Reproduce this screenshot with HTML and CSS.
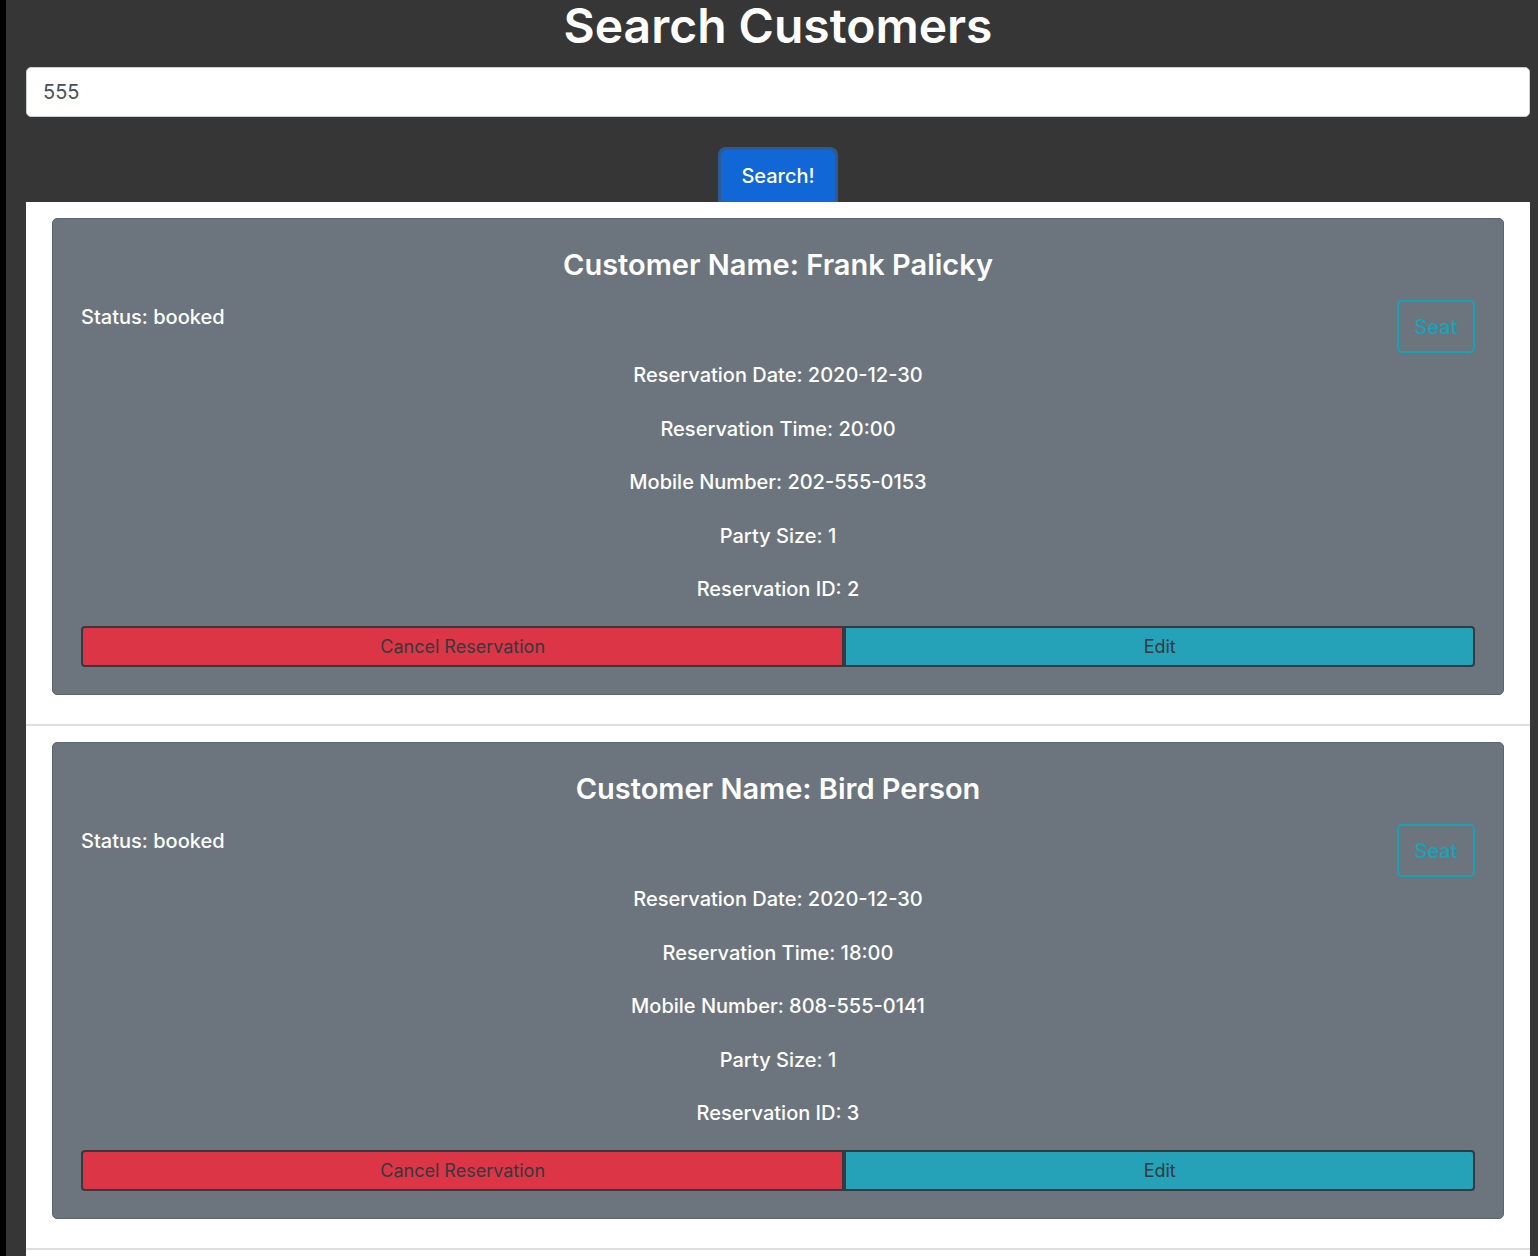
FILE: index.html
```html
<!DOCTYPE html>
<html lang="en">
<head>
<meta charset="utf-8">
<title>Search Customers</title>
<link rel="stylesheet" href="styles.css">
</head>
<body>
<div class="page">
  <h1 class="page-title">Search Customers</h1>
  <input class="search-input" type="text" value="555">
  <div class="search-row">
    <button class="btn-search" type="button">Search!</button>
  </div>
  <ul class="results">
    <li class="result-item">
      <div class="res-card">
        <h2 class="res-title">Customer Name: Frank Palicky</h2>
        <div class="status-row">
          <p class="status">Status: booked</p>
          <button class="btn-seat" type="button">Seat</button>
        </div>
        <p class="info">Reservation Date: 2020-12-30</p>
        <p class="info">Reservation Time: 20:00</p>
        <p class="info">Mobile Number: 202-555-0153</p>
        <p class="info">Party Size: 1</p>
        <p class="info info-last">Reservation ID: 2</p>
        <div class="actions">
          <button class="btn-act btn-cancel" type="button">Cancel Reservation</button>
          <button class="btn-act btn-edit" type="button">Edit</button>
        </div>
      </div>
    </li>
    <li class="result-item">
      <div class="res-card">
        <h2 class="res-title">Customer Name: Bird Person</h2>
        <div class="status-row">
          <p class="status">Status: booked</p>
          <button class="btn-seat" type="button">Seat</button>
        </div>
        <p class="info">Reservation Date: 2020-12-30</p>
        <p class="info">Reservation Time: 18:00</p>
        <p class="info">Mobile Number: 808-555-0141</p>
        <p class="info">Party Size: 1</p>
        <p class="info info-last">Reservation ID: 3</p>
        <div class="actions">
          <button class="btn-act btn-cancel" type="button">Cancel Reservation</button>
          <button class="btn-act btn-edit" type="button">Edit</button>
        </div>
      </div>
    </li>
  </ul>
</div>
</body>
</html>
```

FILE: styles.css
```css
* { box-sizing: border-box; }

html, body {
  margin: 0;
  padding: 0;
  background: #363636;
  height: 100%;
}

body {
  font-family: Inter, "Noto Sans", "Liberation Sans", sans-serif;
  color: #fff;
  border-left: 6px solid #000;
  overflow: hidden;
}

.page {
  padding: 0 8px 0 20px;
}

.page-title {
  margin: 0 0 15px;
  font-size: 48px;
  line-height: 52px;
  font-weight: 600;
  text-align: center;
  color: #fff;
}

.search-input {
  display: block;
  width: 100%;
  height: 50px;
  padding: 0 16px;
  font-family: inherit;
  font-size: 20px;
  color: #495057;
  background: #fff;
  border: 1px solid #c9ced4;
  border-radius: 5px;
  outline: none;
}

.search-row {
  height: 85px;
  padding-top: 33px;
  overflow: hidden;
  display: flex;
  justify-content: center;
}

.btn-search {
  height: 58px;
  padding: 0 19px 6px;
  font-family: inherit;
  font-size: 20px;
  font-weight: 500;
  color: #fff;
  background: #1067d5;
  border: 1px solid #1067d5;
  border-radius: 5px;
  box-shadow: 0 0 0 3px #2d5a91;
}

.results {
  list-style: none;
  margin: 0;
  padding: 0 0 40px;
  background: #fff;
}

.result-item {
  padding: 16px 26px 29px;
  border-bottom: 2px solid #dedede;
}

.res-card {
  background: #6c757d;
  border: 1px solid #5d656c;
  border-radius: 5px;
  padding: 28px 28px 27px;
}

.res-title {
  margin: 0 0 17px;
  font-size: 29px;
  line-height: 36px;
  font-weight: 600;
  text-align: center;
}

.status-row {
  display: flex;
  justify-content: space-between;
  align-items: flex-start;
  margin-bottom: 7px;
}

.status {
  margin: 2px 0 0;
  font-size: 20px;
  line-height: 30px;
  font-weight: 500;
}

.btn-seat {
  width: 78px;
  height: 53px;
  font-family: inherit;
  font-size: 20px;
  font-weight: 500;
  color: #17a2b8;
  background: transparent;
  border: 2px solid #17a2b8;
  border-radius: 5px;
  padding: 0;
}

.info {
  margin: 0 0 23.5px;
  font-size: 20px;
  line-height: 30px;
  font-weight: 500;
  text-align: center;
}

.info-last {
  margin-bottom: 22px;
}

.actions {
  display: flex;
}

.btn-act {
  flex: 1 1 auto;
  height: 41px;
  padding: 0 12px;
  font-family: inherit;
  font-size: 18px;
  color: #343a40;
  border: 2px solid #343a40;
}

.btn-cancel {
  background: #dc3545;
  border-radius: 4px 0 0 4px;
}

.btn-edit {
  background: #25a2b8;
  border-radius: 0 4px 4px 0;
}
```
